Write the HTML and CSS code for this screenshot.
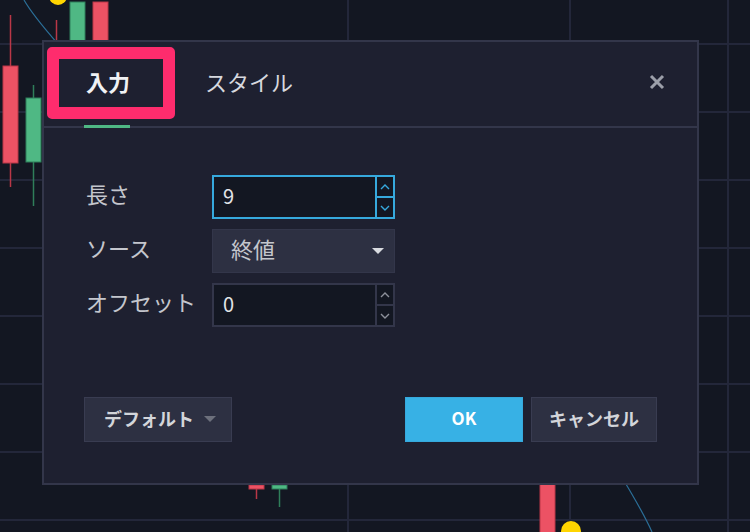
FILE: index.html
```html
<!DOCTYPE html>
<html lang="ja">
<head>
  <meta charset="UTF-8">
  <title>インジケーター設定</title>
  <link rel="stylesheet" href="styles.css">
</head>
<body>
  <svg class="chart" width="750" height="532" viewBox="0 0 750 532">
    <g class="grid">
      <line x1="0" y1="44" x2="750" y2="44" />
      <line x1="0" y1="112" x2="750" y2="112" />
      <line x1="0" y1="180" x2="750" y2="180" />
      <line x1="0" y1="248" x2="750" y2="248" />
      <line x1="0" y1="316" x2="750" y2="316" />
      <line x1="0" y1="384" x2="750" y2="384" />
      <line x1="0" y1="452" x2="750" y2="452" />
      <line x1="0" y1="520" x2="750" y2="520" />
      <line x1="348" y1="0" x2="348" y2="532" />
      <line x1="570" y1="0" x2="570" y2="532" />
      <line x1="728" y1="0" x2="728" y2="532" />
    </g>
    <path class="ma" d="M24 0 C 32 14, 44 28, 58 44" />
    <path class="ma" d="M626 484 C 634 498, 644 514, 652 532" />

    <line class="wick-down" x1="10.5" y1="15" x2="10.5" y2="187" />
    <rect class="down" x="3" y="66" width="15" height="97" />
    <line class="wick-up" x1="33.5" y1="85" x2="33.5" y2="206" />
    <rect class="up" x="26" y="98" width="15" height="64" />
    <line class="wick-down" x1="56.5" y1="20" x2="56.5" y2="44" />
    <circle class="dot" cx="58" cy="-4" r="9" />
    <rect class="up" x="70" y="2" width="15" height="40" />
    <rect class="down" x="93" y="2" width="15" height="40" />

    <line class="wick-down" x1="256.5" y1="488" x2="256.5" y2="499" />
    <rect class="down" x="249" y="485" width="15" height="4" />
    <line class="wick-up" x1="279.5" y1="488" x2="279.5" y2="507" />
    <rect class="up" x="272" y="485" width="15" height="4" />
    <rect class="down" x="540" y="484" width="15" height="50" />
    <circle class="dot" cx="571" cy="531" r="10" />
  </svg>

  <div class="dialog">
    <div class="header">
      <div class="tab active">入力</div>
      <div class="tab">スタイル</div>
      <div class="close">
        <svg width="16" height="16" viewBox="0 0 16 16"><path d="M2 2 L14 14 M14 2 L2 14" /></svg>
      </div>
    </div>

    <div class="content">
      <div class="form">
        <div class="label">長さ</div>
        <div class="num focused">
          <div class="num-value">9</div>
          <div class="spin">
            <span><svg width="10" height="6" viewBox="0 0 10 6"><path d="M1 5 L5 1 L9 5" /></svg></span>
            <span><svg width="10" height="6" viewBox="0 0 10 6"><path d="M1 1 L5 5 L9 1" /></svg></span>
          </div>
        </div>

        <div class="label">ソース</div>
        <div class="select">
          <span>終値</span>
          <i class="caret"></i>
        </div>

        <div class="label">オフセット</div>
        <div class="num">
          <div class="num-value">0</div>
          <div class="spin">
            <span><svg width="10" height="6" viewBox="0 0 10 6"><path d="M1 5 L5 1 L9 5" /></svg></span>
            <span><svg width="10" height="6" viewBox="0 0 10 6"><path d="M1 1 L5 5 L9 1" /></svg></span>
          </div>
        </div>
      </div>
    </div>

    <div class="footer">
      <button class="btn btn-default">デフォルト <i class="caret dim"></i></button>
      <div class="spacer"></div>
      <button class="btn btn-ok">OK</button>
      <button class="btn">キャンセル</button>
    </div>
  </div>

  <div class="highlight"></div>
</body>
</html>
```

FILE: styles.css
```css
body {
  margin: 0;
  width: 750px;
  height: 532px;
  overflow: hidden;
  position: relative;
  background-color: #131722;
  font-family: "Noto Sans CJK JP", "Noto Sans", sans-serif;
  color: #c9cbd2;
}

.chart {
  display: block;
}

.grid line {
  stroke: #23273a;
  stroke-width: 2;
}

.ma {
  fill: none;
  stroke: #2b6f98;
  stroke-width: 1.2;
}

.up {
  fill: #4fb884;
  stroke: #2f7e5a;
  stroke-width: 1;
}

.down {
  fill: #ec5264;
  stroke: #b93747;
  stroke-width: 1;
}

.wick-up {
  stroke: #2f7e5a;
  stroke-width: 1.5;
}

.wick-down {
  stroke: #b93747;
  stroke-width: 1.5;
}

.dot {
  fill: #ffd500;
}

/* dialog */
.dialog {
  position: absolute;
  left: 42px;
  top: 40px;
  width: 657px;
  height: 445px;
  box-sizing: border-box;
  border: 2px solid #33364a;
  background: #1e2030;
  display: flex;
  flex-direction: column;
}

.header {
  height: 86px;
  box-sizing: border-box;
  border-bottom: 2px solid #33364a;
  padding: 0 32px 0 40px;
  display: flex;
  align-items: stretch;
  gap: 71px;
}

.tab {
  position: relative;
  display: flex;
  align-items: center;
  padding: 0 2px 6px;
  font-size: 22px;
  color: #d6d8de;
}

.tab.active {
  font-weight: bold;
  color: #f0f1f4;
}

.tab.active::after {
  content: "";
  position: absolute;
  left: 0;
  right: 2px;
  bottom: -2px;
  height: 3px;
  background: #4fb884;
}

.close {
  margin-left: auto;
  display: flex;
  align-items: center;
  padding-bottom: 4px;
}

.close svg {
  display: block;
}

.close path {
  stroke: #9c9fa9;
  stroke-width: 3;
  fill: none;
}

.content {
  padding: 47px 0 0 42px;
}

.form {
  display: grid;
  grid-template-columns: 126px 183px;
  grid-auto-rows: 44px;
  row-gap: 10px;
  align-items: center;
}

.label {
  font-size: 22px;
  color: #c4c6cd;
  padding-bottom: 8px;
  white-space: nowrap;
}

.num {
  display: flex;
  height: 44px;
}

.num-value {
  flex: 1;
  box-sizing: border-box;
  border: 2px solid #33364a;
  background: #131722;
  padding: 0 0 4px 9px;
  display: flex;
  align-items: center;
  font-size: 20px;
  color: #e2e4e8;
}

.spin {
  width: 18px;
  display: flex;
  flex-direction: column;
}

.spin span {
  flex: 1;
  box-sizing: border-box;
  border: 2px solid #33364a;
  border-left: 0;
  background: #131722;
  display: flex;
  align-items: center;
  justify-content: center;
}

.spin span + span {
  border-top: 0;
}

.spin path {
  fill: none;
  stroke: #8d909b;
  stroke-width: 1.4;
}

.num.focused .num-value,
.num.focused .spin span {
  border-color: #36a9dd;
}

.num.focused .spin path {
  stroke: #36a9dd;
}

.select {
  height: 44px;
  box-sizing: border-box;
  border: 1px solid #33364a;
  background: #2d3042;
  display: flex;
  align-items: center;
  justify-content: space-between;
  padding: 0 10px 6px 18px;
  font-size: 22px;
  color: #c4c6cd;
}

.caret {
  display: inline-block;
  width: 0;
  height: 0;
  border-left: 6px solid transparent;
  border-right: 6px solid transparent;
  border-top: 6px solid #d9dbe0;
}

.select .caret {
  margin-top: 5px;
}

.caret.dim {
  border-top-color: #6d707c;
  margin-top: 3px;
}

.footer {
  margin-top: auto;
  padding: 0 40px 41px 40px;
  display: flex;
  gap: 8px;
}

.spacer {
  flex: 1;
}

.btn {
  height: 45px;
  box-sizing: border-box;
  border: 1px solid #393c51;
  background: #2d3042;
  color: #d3d5da;
  font-family: inherit;
  font-size: 18px;
  font-weight: bold;
  padding: 0 0 4px;
  width: 126px;
  display: flex;
  align-items: center;
  justify-content: center;
}

.btn-default {
  width: 148px;
  gap: 10px;
  padding-left: 4px;
}

.btn-ok {
  width: 118px;
  border-color: #36a9dd;
  background: #37b1e5;
  color: #ffffff;
  font-size: 17px;
}

.highlight {
  position: absolute;
  left: 47px;
  top: 47px;
  width: 128px;
  height: 72px;
  box-sizing: border-box;
  border: 12px solid #fe2c6d;
  border-radius: 5px;
}
```
